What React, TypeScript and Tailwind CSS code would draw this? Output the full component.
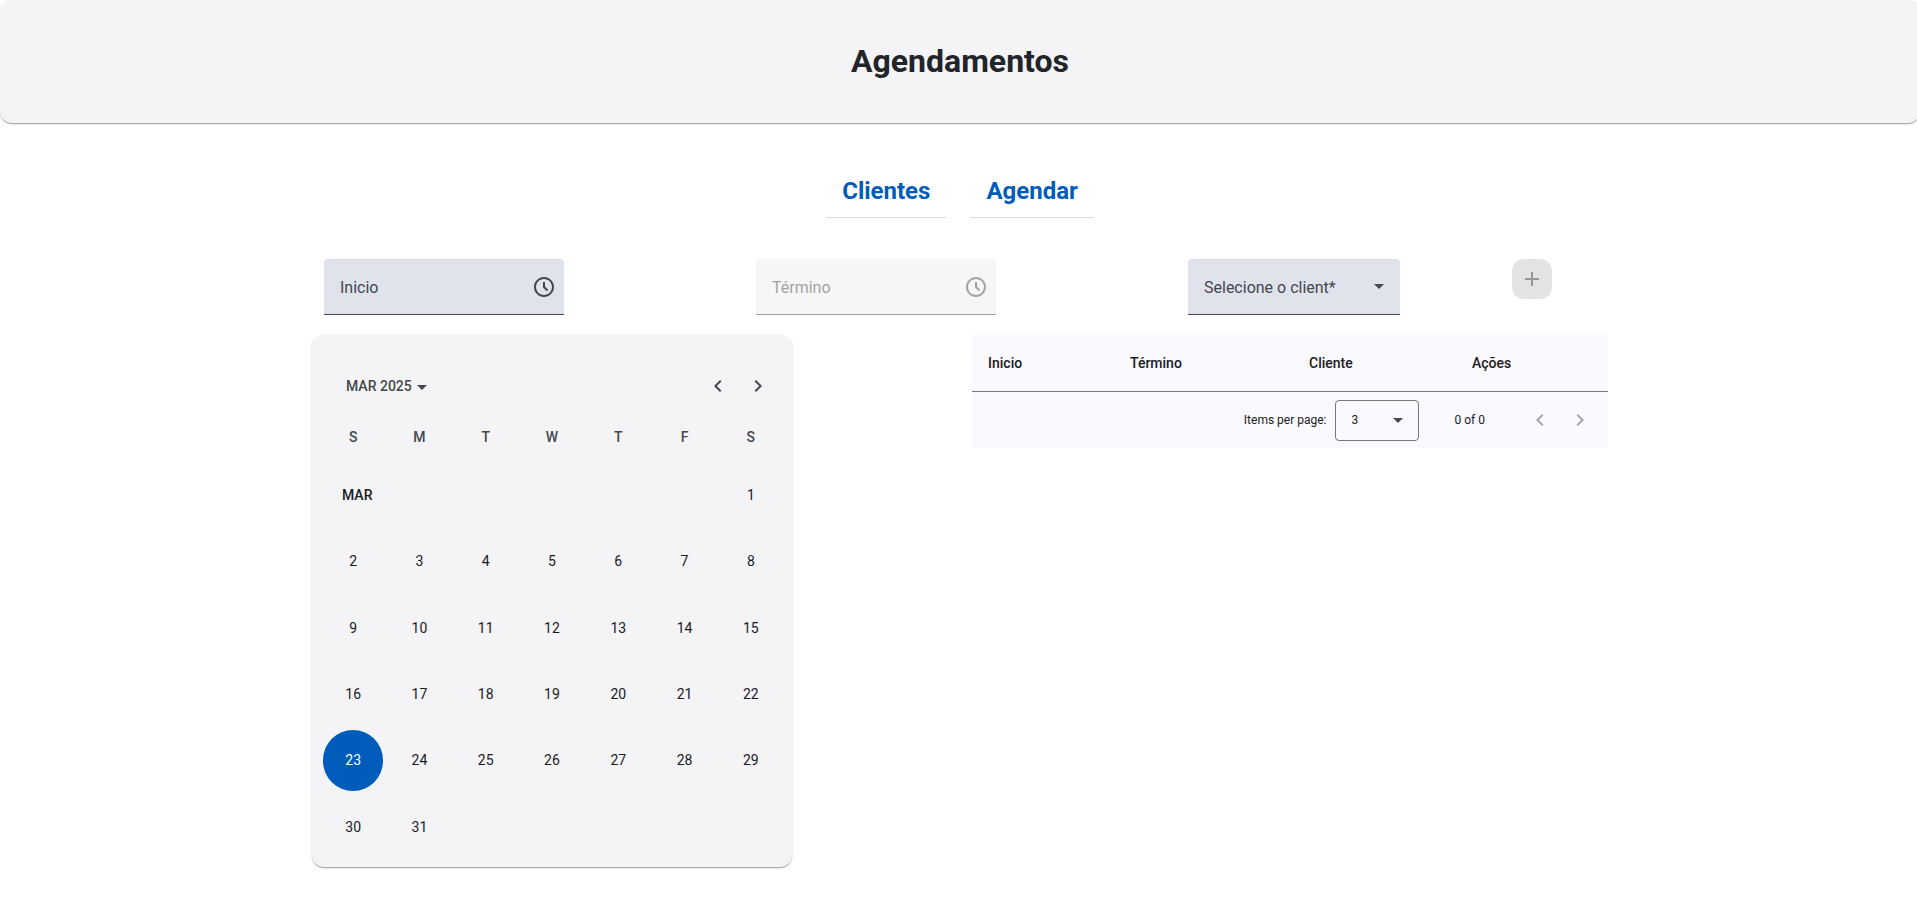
import { useState } from "react";

const CARD =
  "bg-[#f4f3f6] rounded-xl shadow-[0_2px_1px_-1px_rgba(0,0,0,0.2),0_1px_1px_0_rgba(0,0,0,0.14),0_1px_3px_0_rgba(0,0,0,0.12)]";

const WEEKDAYS = [
  ["Sunday", "S"],
  ["Monday", "M"],
  ["Tuesday", "T"],
  ["Wednesday", "W"],
  ["Thursday", "T"],
  ["Friday", "F"],
  ["Saturday", "S"],
];

const WEEKS = [
  [2, 3, 4, 5, 6, 7, 8],
  [9, 10, 11, 12, 13, 14, 15],
  [16, 17, 18, 19, 20, 21, 22],
  [23, 24, 25, 26, 27, 28, 29],
  [30, 31, null, null, null, null, null],
];

function Caret({ className }: { className: string }) {
  return (
    <svg viewBox="0 0 10 5" className={`w-[10px] h-[5px] shrink-0 ${className}`} aria-hidden="true">
      <path d="M0 0h10L5 5z" fill="currentColor" />
    </svg>
  );
}

function Chevron({ direction }: { direction: "left" | "right" }) {
  return (
    <svg viewBox="0 0 24 24" className="size-6" fill="currentColor" aria-hidden="true">
      {direction === "left" ? (
        <path d="M15.41 7.41L14 6l-6 6 6 6 1.41-1.41L10.83 12z" />
      ) : (
        <path d="M10 6L8.59 7.41 13.17 12l-4.58 4.59L10 18l6-6z" />
      )}
    </svg>
  );
}

function TimeField({ id, label, disabled = false }: { id: string; label: string; disabled?: boolean }) {
  const tone = disabled
    ? "bg-[#f6f6f6] border-[#a3a3a5] text-[#a3a3a5]"
    : "bg-[#e0e2ec] border-[#44474e] text-[#44474e]";
  return (
    <div className={`flex items-center w-60 h-14 rounded-t border-b ${tone}`}>
      <input
        id={id}
        aria-label={label}
        placeholder={label}
        disabled={disabled}
        className="min-w-0 flex-1 h-full pl-4 pt-0.5 bg-transparent text-base outline-none placeholder:text-current"
      />
      <button type="button" aria-label={`${label}: hora`} disabled={disabled} className="size-10 grid place-items-center">
        <svg viewBox="0 0 24 24" className="size-6" fill="currentColor" aria-hidden="true">
          <path d="M11.99 2C6.47 2 2 6.48 2 12s4.47 10 9.99 10C17.52 22 22 17.52 22 12S17.52 2 11.99 2zM12 20c-4.42 0-8-3.58-8-8s3.58-8 8-8 8 3.58 8 8-3.58 8-8 8z" />
          <path d="M13 7h-2v5.4l3.8 3.8 1.4-1.4-3.2-3.2z" />
        </svg>
      </button>
    </div>
  );
}

function Day({ value, selected, onSelect }: { value: number; selected: boolean; onSelect: (day: number) => void }) {
  return (
    <div className="aspect-square p-[3px]">
      <button
        type="button"
        onClick={() => onSelect(value)}
        aria-pressed={selected}
        className={`block size-full rounded-full text-sm ${selected ? "bg-[#005cbb] text-white" : "text-[#1a1b1f]"}`}
      >
        {value}
      </button>
    </div>
  );
}

function Calendar() {
  const [selected, setSelected] = useState(23);
  return (
    <section aria-label="Calendário" className={`${CARD} w-[480px] px-2 pt-2 pb-[7px]`}>
      <div className="flex items-center pt-[23px] pl-2 pr-1.5 text-[#44474e]">
        <button type="button" className="flex items-center gap-[5px] h-10 px-[18px] text-sm font-medium">
          MAR 2025
          <Caret className="mt-[3px]" />
        </button>
        <div className="ml-auto flex">
          <button type="button" aria-label="Previous month" className="size-10 grid place-items-center">
            <Chevron direction="left" />
          </button>
          <button type="button" aria-label="Next month" className="size-10 grid place-items-center">
            <Chevron direction="right" />
          </button>
        </div>
      </div>
      <table className="w-full table-fixed text-center text-sm text-[#1a1b1f]">
        <thead>
          <tr className="h-14 text-[#44474e]">
            {WEEKDAYS.map(([name, letter]) => (
              <th key={name} abbr={name} scope="col" className="font-medium pt-1.5">
                {letter}
              </th>
            ))}
          </tr>
        </thead>
        <tbody>
          <tr>
            <td colSpan={6} className="pl-[22px] text-left font-medium">
              MAR
            </td>
            <td>
              <Day value={1} selected={selected === 1} onSelect={setSelected} />
            </td>
          </tr>
          {WEEKS.map((week, row) => (
            <tr key={row}>
              {week.map((day, column) => (
                <td key={column}>
                  {day !== null && <Day value={day} selected={selected === day} onSelect={setSelected} />}
                </td>
              ))}
            </tr>
          ))}
        </tbody>
      </table>
    </section>
  );
}

function Appointments() {
  return (
    <section aria-label="Lista de agendamentos" className="w-[636px] bg-[#faf9fd] text-[#1a1b1f]">
      <table className="w-full table-fixed text-left text-sm">
        <colgroup>
          <col className="w-[142px]" />
          <col className="w-[179px]" />
          <col className="w-[163px]" />
          <col />
        </colgroup>
        <thead>
          <tr className="h-14">
            {["Inicio", "Término", "Cliente", "Ações"].map((title) => (
              <th key={title} scope="col" className="px-4 font-medium">
                {title}
              </th>
            ))}
          </tr>
        </thead>
      </table>
      <div className="flex items-center justify-end h-[57px] border-t border-[#74777f] pr-2 text-xs">
        <label htmlFor="page-size">Items per page:</label>
        <div className="relative flex items-center ml-2">
          <select
            id="page-size"
            className="appearance-none w-[84px] h-[41px] pl-4 rounded border border-[#74777f] bg-transparent text-xs"
          >
            <option>3</option>
            <option>5</option>
            <option>10</option>
          </select>
          <Caret className="absolute right-4 text-[#44474e] pointer-events-none" />
        </div>
        <span className="ml-9 mr-[35px]">0 of 0</span>
        <button type="button" disabled aria-label="Previous page" className="size-10 grid place-items-center text-[#a5a4a8]">
          <Chevron direction="left" />
        </button>
        <button type="button" disabled aria-label="Next page" className="size-10 grid place-items-center text-[#a5a4a8]">
          <Chevron direction="right" />
        </button>
      </div>
    </section>
  );
}

export default function App() {
  return (
    <div className="overflow-x-hidden bg-white font-[Roboto,sans-serif]">
      <div className="-mr-[3px]">
        <header className={`${CARD} flex items-center justify-center h-[123px] pb-0.5`}>
          <h1 className="text-[32px] leading-10 font-bold text-[#212529]">Agendamentos</h1>
        </header>

        <nav className="flex justify-center gap-6 pt-[42px] text-2xl font-bold text-[#005cbb]">
          <a href="#clientes" className="px-4 pt-2.5 pb-2.5 border-b border-[#dcdcdf]">
            Clientes
          </a>
          <a href="#agendar" className="px-4 pt-2.5 pb-2.5 border-b border-[#dcdcdf]">
            Agendar
          </a>
        </nav>

        <main className="mx-auto max-w-[1296px] pt-[41px] pb-10">
          <form className="grid grid-cols-[4fr_4fr_3fr_1fr] items-start -mr-3 pl-3 pb-5">
            <TimeField id="start" label="Inicio" />
            <TimeField id="end" label="Término" disabled />
            <div className="relative flex items-center w-[212px] h-14 rounded-t border-b border-[#44474e] bg-[#e0e2ec] text-[#44474e]">
              <select
                aria-label="Selecione o cliente"
                required
                className="appearance-none w-full h-full pl-4 pr-8 pt-0.5 bg-transparent text-base outline-none"
              >
                <option>Selecione o client*</option>
              </select>
              <Caret className="absolute right-4 pointer-events-none" />
            </div>
            <button
              type="button"
              disabled
              aria-label="Adicionar"
              className="size-10 grid place-items-center rounded-xl bg-[#e3e3e4] text-[#979799]"
            >
              <svg viewBox="0 0 24 24" className="size-6" fill="currentColor" aria-hidden="true">
                <path d="M19 13h-6v6h-2v-6H5v-2h6V5h2v6h6z" />
              </svg>
            </button>
          </form>

          <div className="flex items-start justify-between">
            <Calendar />
            <Appointments />
          </div>
        </main>
      </div>
    </div>
  );
}
